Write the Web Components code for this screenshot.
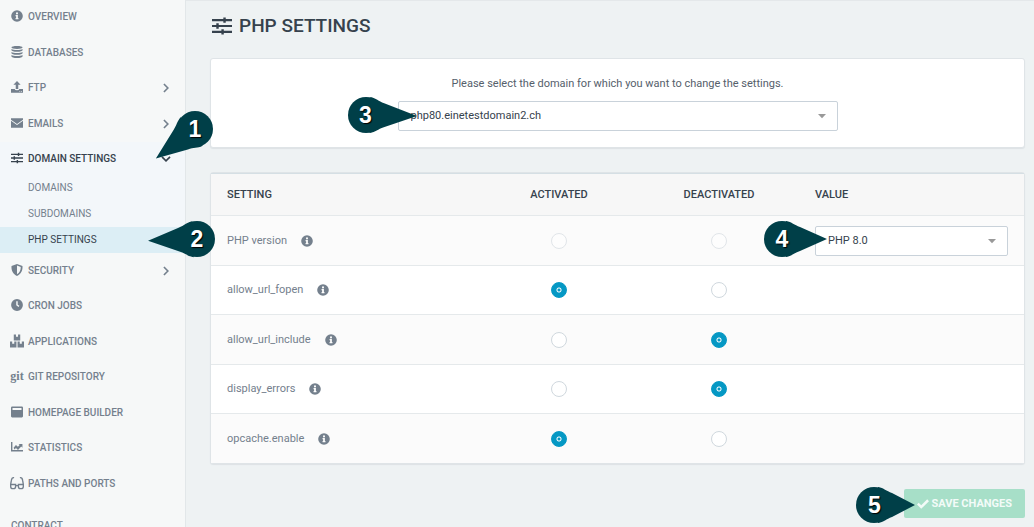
<!DOCTYPE html>
<html lang="en">
<head>
<meta charset="utf-8">
<title>PHP Settings</title>
<style>
  :root {
    --ink: #36424d;
    --muted: #74808d;
    --line: #e5e9eb;
    --field: #c9d2da;
    --accent: #0598c4;
    --pin: #003f48;
  }
  body {
    margin: 0;
    background: #eef2f3;
    color: var(--ink);
    font: 11px/16px Roboto, "Liberation Sans", sans-serif;
  }
</style>
</head>
<body>
<app-shell>
  <side-nav slot="nav"></side-nav>
  <page-title>PHP SETTINGS</page-title>
  <panel-card><domain-picker></domain-picker></panel-card>
  <panel-card class="table"><settings-table></settings-table></panel-card>
  <save-bar></save-bar>
</app-shell>

<script>
const ICONS = {
  info: '<path fill-rule="evenodd" d="M256 8a248 248 0 1 0 0 496a248 248 0 0 0 0-496zm0 92a44 44 0 1 1 0 88a44 44 0 0 1 0-88zm62 290H194v-54h24v-74h-24v-54h100v128h24z"/>',
  database: '<path d="M256 0c140 0 236 26 236 62s-96 62-236 62S20 98 20 62 116 0 256 0zM20 128c44 30 140 42 236 42s192-12 236-42v52c0 38-96 66-236 66S20 218 20 180zm0 130c44 30 140 42 236 42s192-12 236-42v52c0 38-96 66-236 66S20 348 20 310zm0 130c44 30 140 42 236 42s192-12 236-42v58c0 38-96 66-236 66S20 484 20 446z"/>',
  upload: '<path fill-rule="evenodd" d="M256 0 410 165H310V340H202V165H102zM0 345H160a96 50 0 0 0 192 0H512V500H0zm360 80v34h34v-34zm68 0v34h34v-34z"/>',
  mail: '<path d="M0 56H512V118L256 296 0 118zM0 162 256 340 512 162V462H0z"/>',
  sliders: '<path d="M0 76h290V36h62v40h160v56H352v40h-62v-40H0zM0 228h110v-42h62v42h340v56H172v42h-62v-42H0zM0 380h240v-40h62v40h210v56H302v40h-62v-40H0z"/>',
  shield: '<path fill-rule="evenodd" d="M256 0 490 88c18 190-70 350-234 424C92 438 4 278 22 88zm0 66v372c112-62 162-172 160-306z"/>',
  clock: '<path fill-rule="evenodd" d="M256 4a252 252 0 1 0 0 504a252 252 0 0 0 0-504zm-32 92h62v144l72 52-38 50-96-72z"/>',
  boxes: '<path d="M138 20h80v80h76v-80h80v216H138zM0 276h80v80h76v-80h80v216H0zM276 276h80v80h76v-80h80v216H276z"/>',
  window: '<path fill-rule="evenodd" d="M48 22h416a48 48 0 0 1 48 48v372a48 48 0 0 1-48 48H48a48 48 0 0 1-48-48V70a48 48 0 0 1 48-48zm16 62v84h384V84z"/>',
  chart: '<path d="M0 40h60v346h452v66H0zM110 290l100-116 84 76 74-80-44-46h164v164l-52-52-138 144-86-78-60 62z"/>',
  glasses: '<path fill="none" stroke="currentColor" stroke-width="50" d="M150 60C80 50 60 90 50 160L25 300V380a80 80 0 0 0 80 80h20a80 80 0 0 0 80-80V310H25M362 60c70-10 90 30 100 100l25 140v80a80 80 0 0 1-80 80h-20a80 80 0 0 1-80-80V310H487M205 350h102"/>',
  check: '<path d="M72 200 0 276 180 456 512 134 436 58 180 306z"/>',
  right: '<path fill="none" stroke="currentColor" stroke-width="84" d="M150 50 350 256 150 462"/>',
  down: '<path fill="none" stroke="currentColor" stroke-width="84" d="M50 150 256 350 462 150"/>',
  caret: '<path d="M0 130h512L256 400z"/>'
};

const define = (name, html, setup) =>
  customElements.define(name, class extends HTMLElement {
    constructor() {
      super();
      this.attachShadow({ mode: 'open' }).innerHTML = html;
    }
    connectedCallback() {
      if (setup) setup(this.shadowRoot, this);
    }
  });

define('ui-icon', `
  <style>
    :host { display: inline-block; width: 12px; height: 12px; flex: none; }
    :host([name="boxes"]), :host([name="glasses"]) { width: 14px; height: 14px; }
    svg { display: block; width: 100%; height: 100%; }
  </style>
  <svg viewBox="0 0 512 512" fill="currentColor" aria-hidden="true"></svg>`,
  (root, el) => { root.querySelector('svg').innerHTML = ICONS[el.getAttribute('name')]; });

/* Numbered pin: a round head with a tail that points at its target.
   "reach" is the distance from head to tip, "angle" the direction of the tail. */
define('step-pin', `
  <style>
    :host { position: absolute; z-index: 5; width: 36px; height: 36px; pointer-events: none; }
    svg { position: absolute; inset: 0; width: 36px; height: 36px; overflow: visible; fill: var(--pin); }
    span {
      position: absolute; inset: 0; text-align: center; color: #fff;
      font: 700 23px/36px "Liberation Sans", sans-serif; text-shadow: 1px 1px 1px #000;
    }
  </style>
  <svg viewBox="-18 -18 36 36" aria-hidden="true"><circle r="18"/><path/></svg>
  <span><slot></slot></span>`,
  (root, el) => {
    const reach = el.getAttribute('reach');
    const path = root.querySelector('path');
    path.setAttribute('d', `M4-18C10-17 12-14 18-12L${reach} 0 18 12C12 14 10 17 4 18z`);
    path.setAttribute('transform', `rotate(${el.getAttribute('angle')})`);
  });

define('app-shell', `
  <style>
    :host { display: grid; grid-template-columns: 186px minmax(0, 1fr); height: 100vh; overflow: hidden; }
    aside { position: relative; z-index: 2; background: #f6f8f8; border-right: 1px solid #e2e7e9; }
    main { border-top: 1px solid #e4e8ea; padding: 0 9px 0 24px; display: flex; flex-direction: column; }
    ::slotted(panel-card.table) { margin-top: 24px; }
  </style>
  <aside><slot name="nav"></slot></aside>
  <main><slot></slot></main>`);

define('page-title', `
  <style>
    :host { display: block; padding: 13px 0 20px 2px; }
    h1 { margin: 0; display: flex; align-items: center; gap: 7px; font-size: 19px; line-height: 24px; font-weight: 500; }
    ui-icon { width: 20px; height: 20px; }
  </style>
  <h1><ui-icon name="sliders"></ui-icon><slot></slot></h1>`);

define('panel-card', `
  <style>
    :host {
      display: block; background: #fff; border: 1px solid #dfe4e7; border-radius: 3px;
      box-shadow: 0 1px 1px #dde2e5;
    }
  </style>
  <slot></slot>`);

define('nav-item', `
  <style>
    :host { display: block; color: var(--muted); }
    :host([open]) { color: var(--ink); }
    a {
      display: flex; align-items: center; height: 33px; padding: 0 14px 0 10px;
      color: inherit; text-decoration: none; font-size: 10px; font-weight: 500; white-space: nowrap;
    }
    .icon { width: 14px; margin-right: 4px; display: flex; justify-content: center; padding-bottom: 2px; }
    b { font: 700 12px/12px "Liberation Serif", serif; }
    .arrow { margin-left: auto; width: 10px; height: 10px; }
  </style>
  <a href="#"><span class="icon"></span><slot></slot></a>`,
  (root, el) => {
    const icon = el.getAttribute('icon');
    root.querySelector('.icon').innerHTML = icon === 'git' ? '<b>git</b>' : `<ui-icon name="${icon}"></ui-icon>`;
    const arrow = el.getAttribute('arrow');
    if (arrow) root.querySelector('a').insertAdjacentHTML('beforeend', `<ui-icon class="arrow" name="${arrow}"></ui-icon>`);
  });

define('nav-sublink', `
  <style>
    :host { display: block; color: var(--muted); }
    a { display: block; padding-left: 28px; font-size: 10px; line-height: 26px; color: inherit; text-decoration: none; }
    :host([current]) { color: var(--ink); background: #dceef5; }
  </style>
  <a href="#"><slot></slot></a>`);

define('side-nav', `
  <style>
    :host { display: block; }
    nav > nav-item { margin-bottom: 2px; }
    nav > nav-item:nth-child(odd) { margin-bottom: 3px; }
    .group { background: #f3f7fa; position: relative; margin-bottom: 1px; }
    h2 { margin: 18px 0 0 11px; font-size: 10px; line-height: 16px; font-weight: 500; color: var(--muted); }
    .p1 { left: 177px; top: -31px; }
    .p2 { left: 179px; top: 79px; }
  </style>
  <nav aria-label="Main">
    <nav-item icon="info">OVERVIEW</nav-item>
    <nav-item icon="database">DATABASES</nav-item>
    <nav-item icon="upload" arrow="right">FTP</nav-item>
    <nav-item icon="mail" arrow="right">EMAILS</nav-item>
    <div class="group">
      <nav-item icon="sliders" arrow="down" open>DOMAIN SETTINGS</nav-item>
      <nav-sublink>DOMAINS</nav-sublink>
      <nav-sublink>SUBDOMAINS</nav-sublink>
      <nav-sublink current>PHP SETTINGS</nav-sublink>
      <step-pin class="p1" reach="49" angle="143">1</step-pin>
      <step-pin class="p2" reach="49" angle="178">2</step-pin>
    </div>
    <nav-item icon="shield" arrow="right">SECURITY</nav-item>
    <nav-item icon="clock">CRON JOBS</nav-item>
    <nav-item icon="boxes">APPLICATIONS</nav-item>
    <nav-item icon="git">GIT REPOSITORY</nav-item>
    <nav-item icon="window">HOMEPAGE BUILDER</nav-item>
    <nav-item icon="chart">STATISTICS</nav-item>
    <nav-item icon="glasses">PATHS AND PORTS</nav-item>
  </nav>
  <h2>CONTRACT</h2>`);

define('select-field', `
  <style>
    :host { display: block; position: relative; }
    label { display: block; text-align: center; margin-bottom: 9px; color: #55606b; }
    label:empty { display: none; }
    .box { display: grid; align-items: center; }
    .box > * { grid-area: 1 / 1; }
    select {
      appearance: none; width: 100%; height: 30px; margin: 0; padding: 0 24px 0 12px;
      border: 1px solid var(--field); border-radius: 2px; background: #fff;
      font: inherit; color: var(--ink);
    }
    ui-icon { justify-self: end; width: 8px; height: 8px; margin-right: 12px; color: #999; pointer-events: none; }
  </style>
  <label for="s"></label>
  <div class="box"><select id="s"><option></option></select><ui-icon name="caret"></ui-icon></div>
  <slot></slot>`,
  (root, el) => {
    root.querySelector('option').textContent = el.getAttribute('value');
    root.querySelector('label').textContent = el.getAttribute('label') || '';
    if (el.hasAttribute('name')) root.querySelector('select').setAttribute('aria-label', el.getAttribute('name'));
  });

define('domain-picker', `
  <style>
    :host { display: flex; justify-content: center; padding: 17px 0 16px; }
    select-field { width: 440px; }
    step-pin { left: -50px; bottom: -2px; }
  </style>
  <select-field label="Please select the domain for which you want to change the settings." value="php80.einetestdomain2.ch">
    <step-pin reach="51" angle="1">3</step-pin>
  </select-field>`);

define('settings-table', `
  <style>
    :host { display: block; }
    table { width: 100%; table-layout: fixed; border-collapse: separate; border-spacing: 0; }
    col.state { width: 160px; }
    col.value { width: 225px; }
    th, td { padding: 0 16px; height: 49px; text-align: left; border-top: 1px solid var(--line); font-weight: 400; }
    thead th { height: 41px; border-top-color: #d5dfe4; background: #f7f7f7; font-weight: 500; }
    tbody th { color: var(--muted); }
    tbody tr:nth-child(odd) { background: #fbfbfb; }
    tbody tr:nth-child(even) > * { height: 48px; }
    .state { text-align: center; }
    .name { display: flex; align-items: center; gap: 14px; }
    ui-icon { width: 12px; height: 12px; }
    input {
      appearance: none; display: block; width: 16px; height: 16px; margin: 0 auto;
      border: 1px solid #d0d8de; border-radius: 50%; background: #fff;
    }
    input:checked {
      border-color: var(--accent);
      background: radial-gradient(circle, var(--accent) 1px, #fff 2px, #fff 2px, var(--accent) 3px);
    }
    input:disabled { border-color: #e1e5e9; background: #fdfdfd; }
    step-pin { left: -51px; top: -5px; }
  </style>
  <table>
    <colgroup><col><col class="state"><col class="state"><col class="value"></colgroup>
    <thead><tr><th scope="col">SETTING</th><th scope="col" class="state">ACTIVATED</th><th scope="col" class="state">DEACTIVATED</th><th scope="col">VALUE</th></tr></thead>
    <tbody></tbody>
  </table>`,
  root => {
    const rows = [['PHP version', null], ['allow_url_fopen', true], ['allow_url_include', false], ['display_errors', false], ['opcache.enable', true]];
    const radio = (name, label, state, on) =>
      `<td class="state"><input type="radio" name="${name}" aria-label="${name} ${label}"${state === null ? ' disabled' : state === on ? ' checked' : ''}></td>`;
    root.querySelector('tbody').innerHTML = rows.map(([name, state]) => `
      <tr><th scope="row"><span class="name">${name}<ui-icon name="info"></ui-icon></span></th>
      ${radio(name, 'activated', state, true)}${radio(name, 'deactivated', state, false)}
      <td>${state === null ? '<select-field name="PHP version" value="PHP 8.0"><step-pin reach="45" angle="0">4</step-pin></select-field>' : ''}</td></tr>`).join('');
  });

define('save-bar', `
  <style>
    :host { display: flex; justify-content: flex-end; padding-top: 25px; }
    .wrap { position: relative; }
    button {
      display: flex; align-items: center; gap: 2px; height: 29px; padding: 0 13px; border: 0; border-radius: 2px;
      background: #a7dfc8; color: #f3fbf8; font: inherit; font-weight: 700;
    }
    step-pin { left: -48px; top: -2px; }
  </style>
  <div class="wrap">
    <button type="button"><ui-icon name="check"></ui-icon>SAVE CHANGES</button>
    <step-pin reach="41" angle="0">5</step-pin>
  </div>`);
</script>
</body>
</html>
